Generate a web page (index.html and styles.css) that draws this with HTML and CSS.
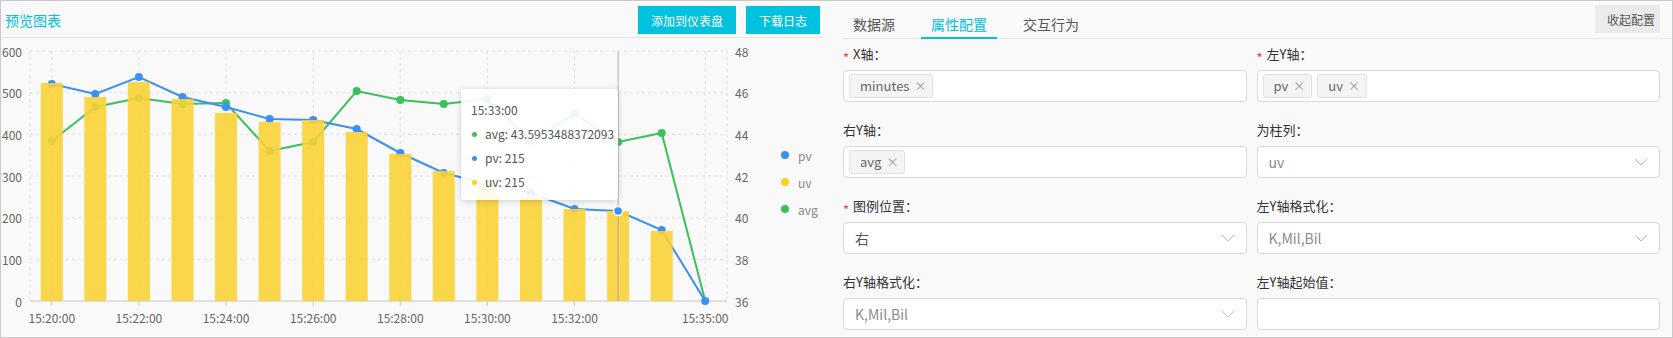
FILE: index.html
```html
<!DOCTYPE html>
<html lang="zh-CN">
<head>
    <meta charset="UTF-8">
    <title>预览图表</title>
    <link rel="stylesheet" href="styles.css">
</head>
<body>
    <div class="page">
        <div class="preview">
            <div class="preview-head">
                <span class="preview-title">预览图表</span>
                <div class="head-actions">
                    <button class="btn-primary">添加到仪表盘</button>
                    <button class="btn-primary">下载日志</button>
                </div>
            </div>

            <svg class="chart" width="822" height="299" viewBox="1 38 822 299">
                <!-- grid -->
                <g class="grid">
                    <line x1="30" y1="51" x2="727" y2="51"/>
                    <line x1="30" y1="92.7" x2="727" y2="92.7"/>
                    <line x1="30" y1="134.3" x2="727" y2="134.3"/>
                    <line x1="30" y1="176" x2="727" y2="176"/>
                    <line x1="30" y1="217.7" x2="727" y2="217.7"/>
                    <line x1="30" y1="259.3" x2="727" y2="259.3"/>
                    <line x1="30" y1="51" x2="30" y2="301"/>
                    <line x1="51.8" y1="51" x2="51.8" y2="301"/>
                    <line x1="138.9" y1="51" x2="138.9" y2="301"/>
                    <line x1="226" y1="51" x2="226" y2="301"/>
                    <line x1="313.2" y1="51" x2="313.2" y2="301"/>
                    <line x1="400.3" y1="51" x2="400.3" y2="301"/>
                    <line x1="487.4" y1="51" x2="487.4" y2="301"/>
                    <line x1="574.5" y1="51" x2="574.5" y2="301"/>
                    <line x1="705.2" y1="51" x2="705.2" y2="301"/>
                    <line x1="727" y1="51" x2="727" y2="301"/>
                </g>
                <g class="axis">
                    <line x1="30" y1="301" x2="727" y2="301"/>
                    <line x1="51.8" y1="301" x2="51.8" y2="306"/>
                    <line x1="138.9" y1="301" x2="138.9" y2="306"/>
                    <line x1="226" y1="301" x2="226" y2="306"/>
                    <line x1="313.2" y1="301" x2="313.2" y2="306"/>
                    <line x1="400.3" y1="301" x2="400.3" y2="306"/>
                    <line x1="487.4" y1="301" x2="487.4" y2="306"/>
                    <line x1="574.5" y1="301" x2="574.5" y2="306"/>
                    <line x1="705.2" y1="301" x2="705.2" y2="306"/>
                </g>

                <!-- lines -->
                <polyline class="line-avg" points="51.8,141 95.3,107 138.9,98 182.5,104 226,103 269.6,151 313.2,142 356.7,91 400.3,100 443.8,104 487.4,99 531,141 574.5,114 618.1,142 661.7,133 705.2,301"/>
                <g class="dots-avg">
                    <circle cx="51.8" cy="141" r="4"/><circle cx="95.3" cy="107" r="4"/><circle cx="138.9" cy="98" r="4"/>
                    <circle cx="182.5" cy="104" r="4"/><circle cx="226" cy="103" r="4"/><circle cx="269.6" cy="151" r="4"/>
                    <circle cx="313.2" cy="142" r="4"/><circle cx="356.7" cy="91" r="4"/><circle cx="400.3" cy="100" r="4"/>
                    <circle cx="443.8" cy="104" r="4"/><circle cx="487.4" cy="99" r="4"/><circle cx="531" cy="141" r="4"/>
                    <circle cx="574.5" cy="114" r="4"/><circle cx="618.1" cy="142" r="4"/><circle cx="661.7" cy="133" r="4"/>
                </g>
                <polyline class="line-pv" points="51.8,84 95.3,94 138.9,77 182.5,97 226,107 269.6,119 313.2,120 356.7,129 400.3,153 443.8,173 487.4,184 531,193 574.5,209 618.1,211 661.7,230 705.2,301"/>
                <g class="dots-pv">
                    <circle cx="51.8" cy="84" r="4"/><circle cx="95.3" cy="94" r="4"/><circle cx="138.9" cy="77" r="4"/>
                    <circle cx="182.5" cy="97" r="4"/><circle cx="226" cy="107" r="4"/><circle cx="269.6" cy="119" r="4"/>
                    <circle cx="313.2" cy="120" r="4"/><circle cx="356.7" cy="129" r="4"/><circle cx="400.3" cy="153" r="4"/>
                    <circle cx="443.8" cy="173" r="4"/><circle cx="487.4" cy="184" r="4"/><circle cx="531" cy="193" r="4"/>
                    <circle cx="574.5" cy="209" r="4"/><circle cx="661.7" cy="230" r="4"/>
                </g>

                <!-- uv bars drawn over the lines -->
                <g class="bars-uv">
                    <rect x="40.8" y="83" width="22" height="218"/>
                    <rect x="84.3" y="97" width="22" height="204"/>
                    <rect x="127.9" y="82" width="22" height="219"/>
                    <rect x="171.5" y="99" width="22" height="202"/>
                    <rect x="215" y="113" width="22" height="188"/>
                    <rect x="258.6" y="122" width="22" height="179"/>
                    <rect x="302.2" y="120" width="22" height="181"/>
                    <rect x="345.7" y="132" width="22" height="169"/>
                    <rect x="389.3" y="154" width="22" height="147"/>
                    <rect x="432.8" y="171" width="22" height="130"/>
                    <rect x="476.4" y="182" width="22" height="119"/>
                    <rect x="520" y="195" width="22" height="106"/>
                    <rect x="563.5" y="209" width="22" height="92"/>
                    <rect x="607.1" y="211" width="22" height="90"/>
                    <rect x="650.7" y="231" width="22" height="70"/>
                </g>

                <line class="crosshair" x1="618.1" y1="51" x2="618.1" y2="301"/>
                <circle class="dot-hover" cx="618.1" cy="211" r="4.5"/>
                <circle class="dot-end" cx="705.2" cy="301" r="4"/>

                <g class="ticks-left">
                    <text x="22" y="51">600</text>
                    <text x="22" y="92.7">500</text>
                    <text x="22" y="134.3">400</text>
                    <text x="22" y="176">300</text>
                    <text x="22" y="217.7">200</text>
                    <text x="22" y="259.3">100</text>
                    <text x="22" y="301">0</text>
                </g>
                <g class="ticks-right">
                    <text x="735" y="51">48</text>
                    <text x="735" y="92.7">46</text>
                    <text x="735" y="134.3">44</text>
                    <text x="735" y="176">42</text>
                    <text x="735" y="217.7">40</text>
                    <text x="735" y="259.3">38</text>
                    <text x="735" y="301">36</text>
                </g>
                <g class="ticks-bottom">
                    <text x="51.8" y="317">15:20:00</text>
                    <text x="138.9" y="317">15:22:00</text>
                    <text x="226" y="317">15:24:00</text>
                    <text x="313.2" y="317">15:26:00</text>
                    <text x="400.3" y="317">15:28:00</text>
                    <text x="487.4" y="317">15:30:00</text>
                    <text x="574.5" y="317">15:32:00</text>
                    <text x="705.2" y="317">15:35:00</text>
                </g>

                <g class="legend">
                    <circle class="lg-pv" cx="785" cy="155" r="4"/>
                    <text x="798" y="155">pv</text>
                    <circle class="lg-uv" cx="785" cy="182" r="4"/>
                    <text x="798" y="182">uv</text>
                    <circle class="lg-avg" cx="785" cy="209" r="4"/>
                    <text x="798" y="209">avg</text>
                </g>
            </svg>

            <div class="chart-tip">
                <div class="tip-title">15:33:00</div>
                <div class="tip-row"><i class="tip-dot avg"></i>avg: 43.5953488372093</div>
                <div class="tip-row"><i class="tip-dot pv"></i>pv: 215</div>
                <div class="tip-row"><i class="tip-dot uv"></i>uv: 215</div>
            </div>
        </div>

        <div class="config">
            <div class="tabs">
                <span class="tab">数据源</span>
                <span class="tab active">属性配置</span>
                <span class="tab">交互行为</span>
                <button class="btn-collapse">收起配置</button>
            </div>

            <div class="form">
                <div class="form-item">
                    <div class="form-label"><span class="req">*</span>X轴：</div>
                    <div class="tag-input">
                        <span class="tag">minutes<span class="tag-x">×</span></span>
                    </div>
                </div>
                <div class="form-item">
                    <div class="form-label"><span class="req">*</span>左Y轴：</div>
                    <div class="tag-input">
                        <span class="tag">pv<span class="tag-x">×</span></span>
                        <span class="tag">uv<span class="tag-x">×</span></span>
                    </div>
                </div>

                <div class="form-item">
                    <div class="form-label">右Y轴：</div>
                    <div class="tag-input">
                        <span class="tag">avg<span class="tag-x">×</span></span>
                    </div>
                </div>
                <div class="form-item">
                    <div class="form-label">为柱列：</div>
                    <div class="select">
                        <span class="select-value muted">uv</span>
                        <svg class="chevron" width="14" height="8" viewBox="0 0 14 8"><polyline points="1,1 7,7 13,1"/></svg>
                    </div>
                </div>

                <div class="form-item">
                    <div class="form-label"><span class="req">*</span>图例位置：</div>
                    <div class="select">
                        <span class="select-value">右</span>
                        <svg class="chevron" width="14" height="8" viewBox="0 0 14 8"><polyline points="1,1 7,7 13,1"/></svg>
                    </div>
                </div>
                <div class="form-item">
                    <div class="form-label">左Y轴格式化：</div>
                    <div class="select">
                        <span class="select-value muted">K,Mil,Bil</span>
                        <svg class="chevron" width="14" height="8" viewBox="0 0 14 8"><polyline points="1,1 7,7 13,1"/></svg>
                    </div>
                </div>

                <div class="form-item">
                    <div class="form-label">右Y轴格式化：</div>
                    <div class="select">
                        <span class="select-value muted">K,Mil,Bil</span>
                        <svg class="chevron" width="14" height="8" viewBox="0 0 14 8"><polyline points="1,1 7,7 13,1"/></svg>
                    </div>
                </div>
                <div class="form-item">
                    <div class="form-label">左Y轴起始值：</div>
                    <div class="text-input"></div>
                </div>
            </div>
        </div>
    </div>
</body>
</html>
```

FILE: styles.css
```css
body {
    margin: 0;
    font-family: "Noto Sans CJK SC", "Noto Sans", sans-serif;
    color: #333;
}

.page {
    width: 1673px;
    height: 338px;
    box-sizing: border-box;
    border: 1px solid #c9c9c9;
    background: #f9f9f9;
    display: flex;
    overflow: hidden;
}

/* preview panel */
.preview {
    width: 822px;
    position: relative;
}

.preview-head {
    height: 37px;
    box-sizing: border-box;
    padding: 2px 3px 0 4px;
    border-bottom: 1px solid #e3e3e3;
    display: flex;
    align-items: center;
    justify-content: space-between;
}

.preview-title {
    color: #00c1de;
    font-size: 14px;
}

.head-actions {
    display: flex;
    gap: 10px;
}

.btn-primary {
    height: 28px;
    padding: 0 13px;
    border: none;
    background: #00c1de;
    color: #fff;
    font-family: inherit;
    font-size: 12px;
    cursor: pointer;
}

.chart {
    display: block;
}

.chart text {
    font-family: "Noto Sans CJK SC", "Noto Sans", sans-serif;
    font-size: 12px;
    fill: #666;
    dominant-baseline: central;
}

.grid line {
    stroke: #e2e2e2;
    stroke-dasharray: 3 3;
}

.axis line {
    stroke: #c8c8c8;
}

.ticks-left text {
    text-anchor: end;
}

.ticks-bottom text {
    text-anchor: middle;
}

.line-pv, .line-avg {
    fill: none;
    stroke-width: 2;
}

.line-pv { stroke: #3a90f5; }
.line-avg { stroke: #3bc15a; }
.dots-pv circle { fill: #3a90f5; }
.dots-avg circle { fill: #3bc15a; }

.bars-uv rect {
    fill: #f8d136;
    fill-opacity: 0.9;
}

.crosshair {
    stroke: #a8a8a8;
}

.dot-hover {
    fill: #3a90f5;
    stroke: #fff;
    stroke-width: 1.5;
}

.dot-end {
    fill: #3a90f5;
}

.legend text {
    fill: #888;
}

.lg-pv { fill: #3a90f5; }
.lg-uv { fill: #fccf1c; }
.lg-avg { fill: #3bc15a; }

.chart-tip {
    position: absolute;
    left: 460px;
    top: 88px;
    width: 157px;
    height: 111px;
    box-sizing: border-box;
    padding: 9px 10px 6px;
    background: rgba(255, 255, 255, 0.9);
    border-radius: 3px;
    box-shadow: 0 1px 6px rgba(0, 0, 0, 0.18);
    font-size: 12px;
    line-height: 24px;
    color: #555;
    white-space: nowrap;
}

.tip-row {
    display: flex;
    align-items: center;
}

.tip-dot {
    flex-shrink: 0;
    width: 5px;
    height: 5px;
    border-radius: 50%;
    margin: 0 8px 0 1px;
}

.tip-dot.avg { background: #3bc15a; }
.tip-dot.pv { background: #3a90f5; }
.tip-dot.uv { background: #fccf1c; }

/* config panel */
.config {
    flex: 1;
    margin-left: 20px;
}

.tabs {
    height: 37px;
    border-bottom: 1px solid #e6e6e6;
    display: flex;
    align-items: flex-start;
}

.tab {
    height: 38px;
    box-sizing: border-box;
    padding: 13px 10px 0;
    margin-right: 16px;
    margin-bottom: -1px;
    border-bottom: 2px solid transparent;
    font-size: 14px;
    line-height: 20px;
    color: #555;
}

.tab.active {
    color: #00c1de;
    border-bottom-color: #00c1de;
}

.btn-collapse {
    margin: 4px 12px 0 auto;
    height: 28px;
    padding: 0 5px 0 12px;
    border: none;
    background: #ebebeb;
    color: #555;
    font-family: inherit;
    font-size: 12px;
}

.form {
    padding: 5px 12px 0 0;
    display: grid;
    grid-template-columns: 1fr 1fr;
    column-gap: 10px;
}

.form-item {
    margin-bottom: 18px;
}

.form-label {
    height: 20px;
    line-height: 20px;
    font-size: 13px;
    color: #333;
    margin-bottom: 6px;
}

.req {
    color: #f04134;
    margin-right: 4px;
    vertical-align: -0.3em;
}

.tag-input, .select, .text-input {
    height: 32px;
    box-sizing: border-box;
    border: 1px solid #dadada;
    border-radius: 4px;
    background: #fff;
}

.tag-input {
    display: flex;
    align-items: center;
    gap: 5px;
    padding: 0 5px;
}

.tag {
    height: 24px;
    box-sizing: border-box;
    padding: 0 6px 0 10px;
    border: 1px solid #e2e2e2;
    border-radius: 3px;
    background: #f4f4f4;
    font-size: 13px;
    line-height: 22px;
    color: #666;
}

.tag-x {
    margin-left: 5px;
    color: #999;
    font-size: 12px;
}

.select {
    display: flex;
    align-items: center;
    justify-content: space-between;
    padding: 0 11px;
}

.select-value {
    font-size: 14px;
    color: #555;
}

.select-value.muted {
    color: #8c8c8c;
}

.chevron polyline {
    fill: none;
    stroke: #bdbdbd;
    stroke-width: 1;
}
```
